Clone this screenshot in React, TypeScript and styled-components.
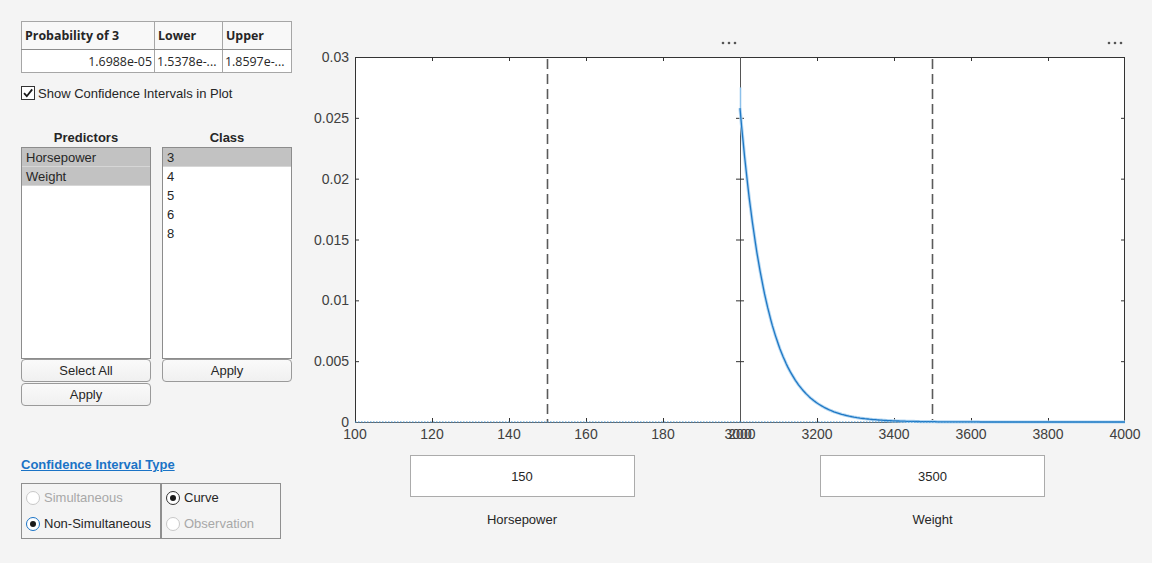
import styled, { createGlobalStyle } from "styled-components";

const GlobalStyle = createGlobalStyle`
  body {
    margin: 0;
    background: #f4f4f4;
    font-family: "Liberation Sans", Arial, sans-serif;
    color: #262626;
  }
`;

const PLOT_TOP = 36;
const PLOT_BOTTOM = 401;
const PLOT_W = 385;
const Y_MAX = 0.03;
const yPos = (v: number) => PLOT_BOTTOM - (v / Y_MAX) * (PLOT_BOTTOM - PLOT_TOP);
const yTicks = [0, 0.005, 0.01, 0.015, 0.02, 0.025, 0.03];

function Dots({ x, y }: { x: number; y: number }) {
  return (
    <g fill="#555">
      <circle cx={x} cy={y} r={1.3} />
      <circle cx={x + 6} cy={y} r={1.3} />
      <circle cx={x + 12} cy={y} r={1.3} />
    </g>
  );
}

type AxesProps = {
  width: number;
  left: number;
  xMin: number;
  xMax: number;
  xTicks: number[];
  marker: number;
  yLabels?: boolean;
  curve?: boolean;
  dotsX: number;
};

function Axes({ width, left, xMin, xMax, xTicks, marker, yLabels, curve, dotsX }: AxesProps) {
  const xPos = (v: number) => left + ((v - xMin) / (xMax - xMin)) * PLOT_W;
  const right = left + PLOT_W;

  const pts: [number, number][] = [];
  if (curve) {
    for (let v = xMin; v <= xMax; v += 4) {
      const p = 0.0258 * Math.exp(-(v - xMin) / 71.3);
      pts.push([xPos(v), yPos(p)]);
    }
  }
  const line = pts.map(([a, b]) => `${a.toFixed(1)},${b.toFixed(1)}`).join(" ");

  return (
    <ChartSvg width={width} height={424}>
      <rect x={left} y={PLOT_TOP} width={PLOT_W} height={PLOT_BOTTOM - PLOT_TOP} fill="#fff" />
      <line x1={xPos(marker)} x2={xPos(marker)} y1={PLOT_TOP + 2} y2={PLOT_BOTTOM} stroke="#5a5a5a" strokeWidth={1.6} strokeDasharray="10 5" />
      <g stroke="#333" strokeWidth={1} fill="none">
        <line x1={left} x2={right} y1={PLOT_TOP + 0.5} y2={PLOT_TOP + 0.5} />
        <line x1={left + 0.5} x2={left + 0.5} y1={PLOT_TOP} y2={PLOT_BOTTOM} stroke={yLabels ? "#333" : "#555"} />
        {!yLabels && <line x1={right - 0.5} x2={right - 0.5} y1={PLOT_TOP} y2={PLOT_BOTTOM} />}
        <line x1={left} x2={right} y1={PLOT_BOTTOM + 0.5} y2={PLOT_BOTTOM + 0.5} stroke="#666" />
        {xTicks.slice(1, -1).map((t) => (
          <g key={t}>
            <line x1={xPos(t) + 0.5} x2={xPos(t) + 0.5} y1={PLOT_TOP} y2={PLOT_TOP + 4} />
            <line x1={xPos(t) + 0.5} x2={xPos(t) + 0.5} y1={PLOT_BOTTOM} y2={PLOT_BOTTOM - 4} />
          </g>
        ))}
        {yTicks.slice(1, -1).map((t) => (
          <g key={t}>
            <line x1={yLabels ? left : left - 4} x2={left + 4} y1={yPos(t) + 0.5} y2={yPos(t) + 0.5} />
            {!yLabels && <line x1={right - 4} x2={right} y1={yPos(t) + 0.5} y2={yPos(t) + 0.5} />}
          </g>
        ))}
      </g>
      {curve && (
        <>
          <line x1={left + 0.5} x2={left + 0.5} y1={yPos(0.0275)} y2={yPos(0.0258)} stroke="#8cc0ea" strokeWidth={1.5} />
          <polyline points={line} fill="none" stroke="#b6d8f3" strokeWidth={3.2} strokeLinejoin="round" />
          <polyline points={line} fill="none" stroke="#1f78c4" strokeWidth={1.3} strokeLinejoin="round" />
        </>
      )}
      <line x1={left} x2={right} y1={PLOT_BOTTOM} y2={PLOT_BOTTOM} stroke="#3d8fd0" strokeWidth={1.2} strokeDasharray="1.5 1.5" />
      <g fontFamily="Liberation Sans, Arial, sans-serif" fontSize={14} fill="#404040">
        {xTicks.map((t) => (
          <text key={t} x={xPos(t)} y={418} textAnchor="middle">
            {t}
          </text>
        ))}
        {yLabels &&
          yTicks.map((t) => (
            <text key={t} x={left - 6} y={yPos(t) + 5} textAnchor="end">
              {t}
            </text>
          ))}
      </g>
      <Dots x={dotsX} y={22} />
    </ChartSvg>
  );
}

function Radio({ label, checked, disabled, focus }: { label: string; checked?: boolean; disabled?: boolean; focus?: boolean }) {
  return (
    <RadioRow $disabled={disabled}>
      <RadioCircle $disabled={disabled} $focus={focus}>
        {checked && <RadioDot />}
      </RadioCircle>
      {label}
    </RadioRow>
  );
}

export default function App() {
  return (
    <>
      <GlobalStyle />
      <Page>
        <LeftPanel>
          <ResultTable>
            <colgroup>
              <col style={{ width: 133 }} />
              <col style={{ width: 68 }} />
              <col style={{ width: 69 }} />
            </colgroup>
            <thead>
              <tr>
                <Th>Probability of 3</Th>
                <Th>Lower</Th>
                <Th>Upper</Th>
              </tr>
            </thead>
            <tbody>
              <tr>
                <Td $align="right">1.6988e-05</Td>
                <Td>1.5378e-...</Td>
                <Td>1.8597e-...</Td>
              </tr>
            </tbody>
          </ResultTable>

          <CheckRow>
            <CheckBox>
              <svg width="12" height="12" viewBox="0 0 12 12">
                <path d="M2 6.2 L4.8 9.2 L10.2 2.4" fill="none" stroke="#1a1a1a" strokeWidth="1.8" />
              </svg>
            </CheckBox>
            Show Confidence Intervals in Plot
          </CheckRow>

          <ListGrid>
            <ListColumn>
              <ListTitle>Predictors</ListTitle>
              <ListBox>
                <ListItem $selected>Horsepower</ListItem>
                <ListItem $selected>Weight</ListItem>
              </ListBox>
              <Button>Select All</Button>
              <Button>Apply</Button>
            </ListColumn>
            <ListColumn>
              <ListTitle>Class</ListTitle>
              <ListBox>
                <ListItem $selected>3</ListItem>
                <ListItem>4</ListItem>
                <ListItem>5</ListItem>
                <ListItem>6</ListItem>
                <ListItem>8</ListItem>
              </ListBox>
              <Button>Apply</Button>
            </ListColumn>
          </ListGrid>

          <LinkTitle>Confidence Interval Type</LinkTitle>
          <RadioGroups>
            <RadioBox $width={140}>
              <Radio label="Simultaneous" disabled />
              <Radio label="Non-Simultaneous" checked focus />
            </RadioBox>
            <RadioBox $width={120}>
              <Radio label="Curve" checked />
              <Radio label="Observation" disabled />
            </RadioBox>
          </RadioGroups>
        </LeftPanel>

        <PlotArea>
          <PlotColumn $width={440}>
            <Axes width={440} left={55} xMin={100} xMax={200} xTicks={[100, 120, 140, 160, 180, 200]} marker={150} yLabels dotsX={423} />
            <EditBox $shift={2}>150</EditBox>
            <FieldLabel $shift={2}>Horsepower</FieldLabel>
          </PlotColumn>
          <PlotColumn $width={385}>
            <Axes width={412} left={0} xMin={3000} xMax={4000} xTicks={[3000, 3200, 3400, 3600, 3800, 4000]} marker={3500} curve dotsX={369} />
            <EditBox $shift={0}>3500</EditBox>
            <FieldLabel $shift={0}>Weight</FieldLabel>
          </PlotColumn>
        </PlotArea>
      </Page>
    </>
  );
}

const Page = styled.div`
  display: flex;
  height: 563px;
  box-sizing: border-box;
  padding: 21px 0 0 21px;
  overflow: hidden;
`;

const LeftPanel = styled.div`
  width: 270px;
  display: flex;
  flex-direction: column;
`;

const ResultTable = styled.table`
  width: 271px;
  border-collapse: collapse;
  border: 1px solid #999;
  font-family: "Open Sans", "Noto Sans", sans-serif;
  font-size: 12.4px;
  table-layout: fixed;
`;

const Th = styled.th`
  height: 27px;
  padding: 0 3px;
  text-align: left;
  font-weight: 700;
  background: #f8f8f8;
  border: 1px solid #a6a6a6;
  border-bottom-color: #8c8c8c;
  white-space: nowrap;
  overflow: hidden;
`;

const Td = styled.td<{ $align?: string }>`
  height: 22px;
  padding: 0 2px;
  text-align: ${(p) => p.$align || "left"};
  background: #fff;
  border: 1px solid #a6a6a6;
  white-space: nowrap;
  overflow: hidden;
`;

const CheckRow = styled.label`
  display: flex;
  align-items: center;
  gap: 3px;
  margin-top: 12px;
  font-size: 13px;
  height: 16px;
`;

const CheckBox = styled.span`
  width: 12px;
  height: 12px;
  border: 1px solid #333;
  background: #fff;
  display: flex;
  align-items: center;
  justify-content: center;
`;

const ListGrid = styled.div`
  display: grid;
  grid-template-columns: 130px 130px;
  gap: 11px;
  margin-top: 29px;
`;

const ListColumn = styled.div`
  display: flex;
  flex-direction: column;
  gap: 1px;
`;

const ListTitle = styled.div`
  font-size: 13px;
  font-weight: 700;
  text-align: center;
  height: 15px;
  line-height: 15px;
  margin-bottom: 1px;
`;

const ListBox = styled.div`
  height: 210px;
  background: #fff;
  border: 1px solid #8c8c8c;
  margin-bottom: -1px;
`;

const ListItem = styled.div<{ $selected?: boolean }>`
  height: 18px;
  line-height: 19px;
  padding-left: 4px;
  font-size: 13px;
  background: ${(p) => (p.$selected ? "#c2c2c2" : "#fff")};
  border-bottom: 1px solid ${(p) => (p.$selected ? "#d6d6d6" : "#fff")};
`;

const Button = styled.button`
  height: 23px;
  padding: 0;
  border: 1px solid #9a9a9a;
  border-radius: 4px;
  background: linear-gradient(#fafafa, #f0f0f0);
  font-family: "Liberation Sans", Arial, sans-serif;
  font-size: 13px;
  color: #262626;
`;

const LinkTitle = styled.div`
  margin-top: 51px;
  font-size: 13px;
  font-weight: 700;
  color: #1a73c6;
  text-decoration: underline;
  height: 15px;
`;

const RadioGroups = styled.div`
  display: flex;
  margin-top: 11px;
`;

const RadioBox = styled.div<{ $width: number }>`
  width: ${(p) => p.$width}px;
  height: 56px;
  box-sizing: border-box;
  border: 1px solid #8f8f8f;
  display: flex;
  flex-direction: column;
  justify-content: space-between;
  padding: 6px 4px 7px 4px;
`;

const RadioRow = styled.div<{ $disabled?: boolean }>`
  display: flex;
  align-items: center;
  gap: 4px;
  font-size: 13px;
  color: ${(p) => (p.$disabled ? "#a8a8a8" : "#262626")};
`;

const RadioCircle = styled.span<{ $disabled?: boolean; $focus?: boolean }>`
  width: 12px;
  height: 12px;
  border-radius: 50%;
  background: #fff;
  border: 1px solid ${(p) => (p.$disabled ? "#c8c8c8" : p.$focus ? "#1a73c6" : "#333")};
  display: flex;
  align-items: center;
  justify-content: center;
`;

const RadioDot = styled.span`
  width: 6px;
  height: 6px;
  border-radius: 50%;
  background: #1a1a1a;
`;

const PlotArea = styled.div`
  display: flex;
  margin-left: 9px;
`;

const PlotColumn = styled.div<{ $width: number }>`
  width: ${(p) => p.$width}px;
  display: flex;
  flex-direction: column;
  align-items: center;
`;

const ChartSvg = styled.svg`
  display: block;
  flex-shrink: 0;
  overflow: visible;
  align-self: flex-start;
`;

const EditBox = styled.div<{ $shift: number }>`
  width: 223px;
  height: 40px;
  margin-top: 10px;
  margin-left: ${(p) => p.$shift * 2}px;
  background: #fff;
  border: 1px solid #ababab;
  display: flex;
  align-items: center;
  justify-content: center;
  font-size: 13px;
`;

const FieldLabel = styled.div<{ $shift: number }>`
  margin-top: 15px;
  margin-left: ${(p) => p.$shift * 2}px;
  font-size: 13px;
`;
